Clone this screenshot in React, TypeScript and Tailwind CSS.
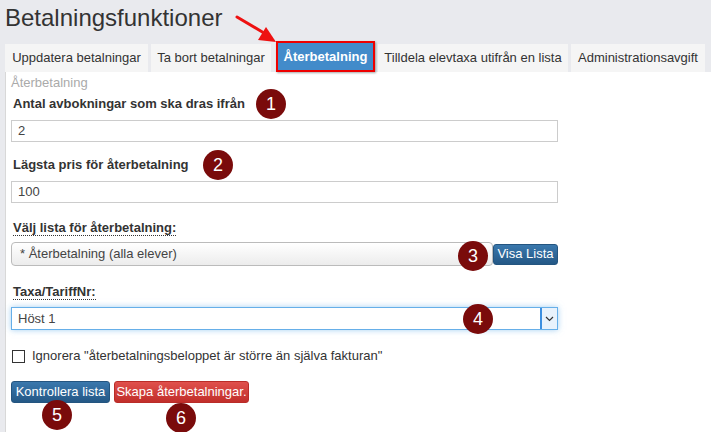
import React from "react";

const Badge = ({ n, className }: { n: number; className: string }) => (
	<div
		className={`absolute w-[30px] h-[30px] rounded-full bg-[#7a0b0b] text-white text-[18px] flex items-center justify-center ${className}`}
	>
		{n}
	</div>
);

const tabs = [
	{ label: "Uppdatera betalningar", w: "w-[143px]" },
	{ label: "Ta bort betalningar", w: "w-[120px]" },
	{ label: "Återbetalning", w: "w-[99px]", active: true },
	{ label: "Tilldela elevtaxa utifrån en lista", w: "w-[190px]" },
	{ label: "Administrationsavgift", w: "w-[134px]" },
];

const App = () => {
	return (
		<div className="relative w-[711px] h-[432px] overflow-hidden bg-[#e9eaee] font-['Liberation_Sans',Arial,sans-serif] text-[13px] text-[#333]">
			<h1 className="pl-[5px] pt-[3px] h-[41px] text-[24px] leading-[30px] text-[#333]">Betalningsfunktioner</h1>

			{/* arrow */}
			<svg className="absolute left-[234px] top-[13px]" width="46" height="32" viewBox="0 0 46 32">
				<line x1="3" y1="4" x2="30" y2="20" stroke="#ee1111" strokeWidth="3" strokeLinecap="round" />
				<polygon points="42,29 24,27 32,14" fill="#ee1111" />
			</svg>

			<div className="flex items-end gap-[3px] pl-[5px] h-[31px]">
				{tabs.map((t) =>
					t.active ? (
						<div key={t.label} className={`${t.w} h-[31px] ml-[2px] border-2 border-[#e00] bg-[#428bca] text-white font-bold flex items-center justify-center shadow-[1px_1px_2px_rgba(0,0,0,0.35)]`}>
							{t.label}
						</div>
					) : (
						<div key={t.label} className={`${t.w} h-[28px] bg-[#f5f5f5] flex items-center justify-center`}>
							{t.label}
						</div>
					)
				)}
			</div>

			<div className="ml-[5px] h-[360px] bg-white border-l border-[#d8d8d8] pl-[5px] pt-[3px]">
				<div className="text-[#aaa] leading-[16px]">Återbetalning</div>

				<div className="font-bold pl-[2px] mt-[5px] leading-[16px]">Antal avbokningar som ska dras ifrån</div>
				<div className="mt-[8px] w-[547px] h-[22px] border border-[#ccc] flex items-center pl-[6px] text-[#444]">2</div>

				<div className="font-bold pl-[2px] mt-[15px] leading-[16px]">Lägsta pris för återbetalning</div>
				<div className="mt-[8px] w-[547px] h-[22px] border border-[#ccc] flex items-center pl-[6px] text-[#444]">100</div>

				<div className="mt-[17px] pl-[2px] leading-[16px]">
					<span className="font-bold border-b border-dotted border-[#333]">Välj lista för återbetalning:</span>
				</div>
				<div className="mt-[6px] flex items-center">
					<div className="w-[482px] h-[24px] border border-[#bbb] rounded-[4px] bg-gradient-to-b from-white to-[#ececec] flex items-center pl-[8px] text-[#444]">
						* Återbetalning (alla elever)
					</div>
					<div className="w-[65px] h-[21px] rounded-[3px] bg-gradient-to-b from-[#3a78ad] to-[#245886] border border-[#245580] text-white flex items-center justify-center">
						Visa Lista
					</div>
				</div>

				<div className="mt-[18px] pl-[2px] leading-[16px]">
					<span className="font-bold border-b border-dotted border-[#333]">Taxa/TariffNr:</span>
				</div>
				<div className="mt-[7px] w-[547px] h-[23px] border border-[#66afe9] shadow-[0_0_6px_rgba(102,175,233,0.6)] flex items-center justify-between pl-[6px] text-[#444]">
					<span>Höst 1</span>
					<div className="w-[17px] h-full border-l-2 border-[#3c8fe0] bg-[#e8f2fc] flex items-center justify-center">
						<svg width="9" height="6" viewBox="0 0 9 6">
							<polyline points="1,1 4.5,4.5 8,1" fill="none" stroke="#333" strokeWidth="1.2" />
						</svg>
					</div>
				</div>

				<label className="mt-[18px] h-[16px] flex items-center gap-[7px] pl-[1px]">
					<span className="w-[13px] h-[13px] border border-[#333] bg-white" />
					<span>Ignorera "återbetalningsbeloppet är större än själva fakturan"</span>
				</label>

				<div className="mt-[17px] flex gap-[4px]">
					<div className="w-[99px] h-[22px] rounded-[3px] bg-gradient-to-b from-[#3a78ad] to-[#245886] border border-[#245580] text-white flex items-center justify-center">
						Kontrollera lista
					</div>
					<div className="w-[135px] h-[22px] rounded-[3px] bg-gradient-to-b from-[#e0504c] to-[#c12e2a] border border-[#b92c28] text-white flex items-center justify-center">
						Skapa återbetalningar.
					</div>
				</div>
			</div>

			<Badge n={1} className="left-[256px] top-[89px]" />
			<Badge n={2} className="left-[203px] top-[150px]" />
			<Badge n={3} className="left-[458px] top-[241px]" />
			<Badge n={4} className="left-[463px] top-[304px]" />
			<Badge n={5} className="left-[42px] top-[400px]" />
			<Badge n={6} className="left-[166px] top-[403px]" />
		</div>
	);
};

export default App;
